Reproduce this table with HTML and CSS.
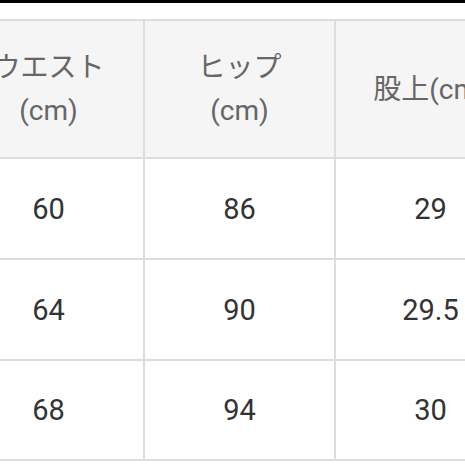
FILE: index.html
```html
<!DOCTYPE html>
<html lang="ja">
<head>
<meta charset="utf-8">
<link rel="stylesheet" href="styles.css">
</head>
<body>
<div class="topbar"></div>
<div class="sheet">
  <div class="size-grid">
    <div class="cell head">ウエスト<br>(cm)</div>
    <div class="cell head">ヒップ<br>(cm)</div>
    <div class="cell head">股上(cm)</div>
    <div class="cell">60</div>
    <div class="cell">86</div>
    <div class="cell">29</div>
    <div class="cell">64</div>
    <div class="cell">90</div>
    <div class="cell">29.5</div>
    <div class="cell">68</div>
    <div class="cell">94</div>
    <div class="cell">30</div>
  </div>
</div>
</body>
</html>
```

FILE: styles.css
```css
html, body {
  margin: 0;
  padding: 0;
  background: #ffffff;
  width: 465px;
  height: 465px;
  overflow: hidden;
}
body {
  font-family: Roboto, "Noto Sans CJK JP", sans-serif;
}
.topbar {
  height: 3px;
  background: #000000;
}
.sheet {
  padding-top: 16px;
}
.size-grid {
  display: grid;
  grid-template-columns: 189px 189px 189px;
  grid-template-rows: 136px 99px 99px 98px;
  gap: 2px;
  padding: 2px;
  background: #dddddd;
  margin-left: -48px;
  width: max-content;
}
.cell {
  background: #ffffff;
  display: flex;
  align-items: center;
  justify-content: center;
  text-align: center;
  font-size: 29px;
  color: #333333;
}
.cell.head {
  background: #f5f5f5;
  color: #666666;
  font-size: 28px;
  line-height: 43px;
}
```
